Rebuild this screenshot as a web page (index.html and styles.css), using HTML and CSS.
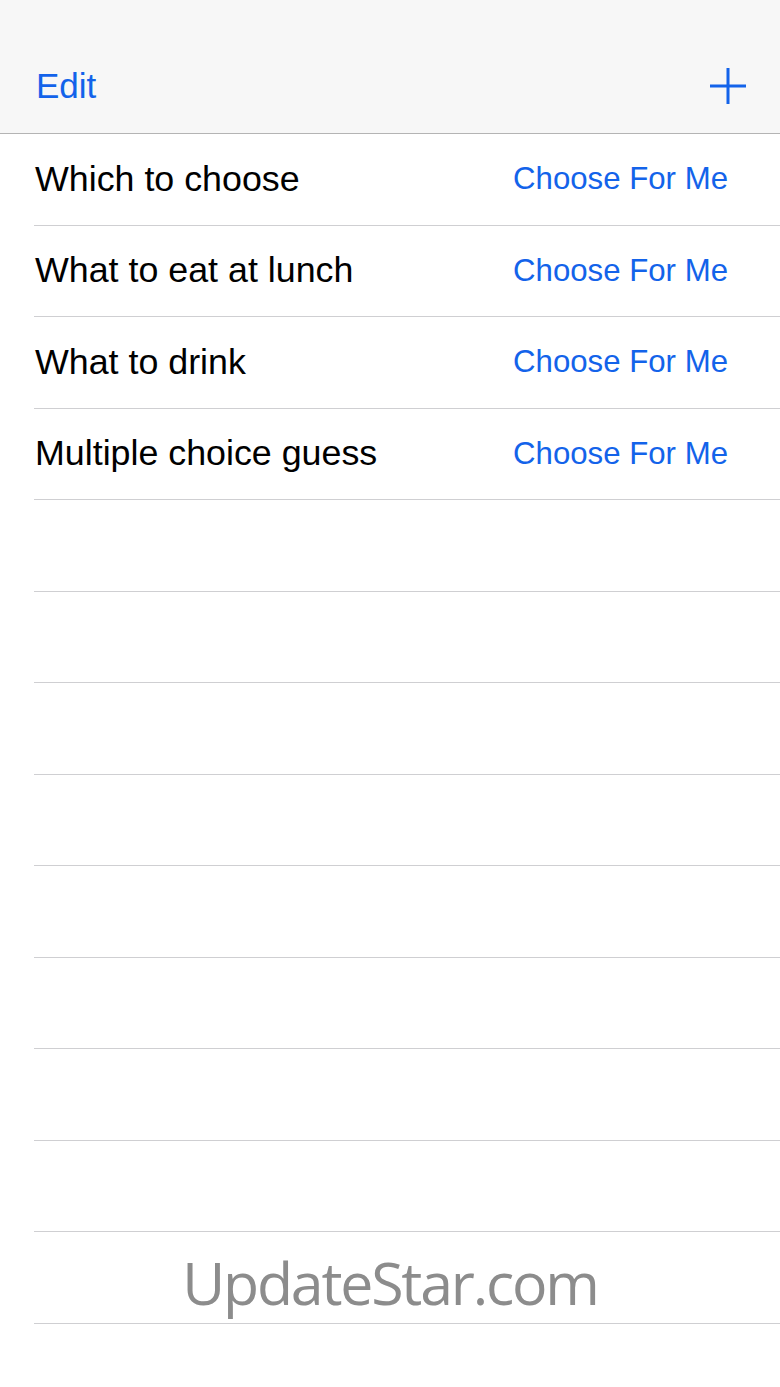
FILE: index.html
```html
<!DOCTYPE html>
<html>
<head>
<meta charset="utf-8">
<link rel="stylesheet" href="styles.css">
</head>
<body>
<div class="screen">
  <header class="navbar">
    <span class="nav-btn">Edit</span>
    <svg class="plus" width="38" height="38" viewBox="0 0 38 38"><path d="M19 1V37M1 19H37" stroke="#1363ea" stroke-width="3" fill="none"/></svg>
  </header>
  <ul class="list">
    <li class="row"><span class="title">Which to choose</span><span class="action">Choose For Me</span></li>
    <li class="row"><span class="title">What to eat at lunch</span><span class="action">Choose For Me</span></li>
    <li class="row"><span class="title">What to drink</span><span class="action">Choose For Me</span></li>
    <li class="row"><span class="title">Multiple choice guess</span><span class="action">Choose For Me</span></li>
    <li class="row"></li>
    <li class="row"></li>
    <li class="row"></li>
    <li class="row"></li>
    <li class="row"></li>
    <li class="row"></li>
    <li class="row"></li>
    <li class="row"></li>
    <li class="row"></li>
  </ul>
  <div class="watermark">UpdateStar.com</div>
</div>
</body>
</html>
```

FILE: styles.css
```css
* { box-sizing: border-box; }
html, body { margin: 0; padding: 0; background: #fff; }
.screen {
  position: relative;
  width: 780px;
  height: 1387px;
  overflow: hidden;
  font-family: "Liberation Sans", Arial, sans-serif;
}
.navbar {
  height: 134px;
  background: #f7f7f7;
  border-bottom: 1px solid #b4b4b4;
  display: flex;
  align-items: center;
  justify-content: space-between;
  padding: 38px 33px 0 36px;
}
.nav-btn {
  color: #1363ea;
  font-size: 35px;
}
.plus { display: block; }
.list {
  list-style: none;
  margin: 0;
  padding: 0 0 0 34px;
}
.row {
  height: 91.5px;
  border-bottom: 1px solid #cfcfd2;
  display: flex;
  align-items: center;
  justify-content: space-between;
  padding: 0 52px 0 1px;
}
.title {
  color: #000;
  font-size: 35.8px;
}
.action {
  color: #1363ea;
  font-size: 31.2px;
}
.watermark {
  position: absolute;
  left: 0;
  right: 0;
  top: 1242px;
  text-align: center;
  font-family: "Open Sans", sans-serif;
  font-size: 59px;
  letter-spacing: -2.2px;
  color: #8c8c8c;
}
```
